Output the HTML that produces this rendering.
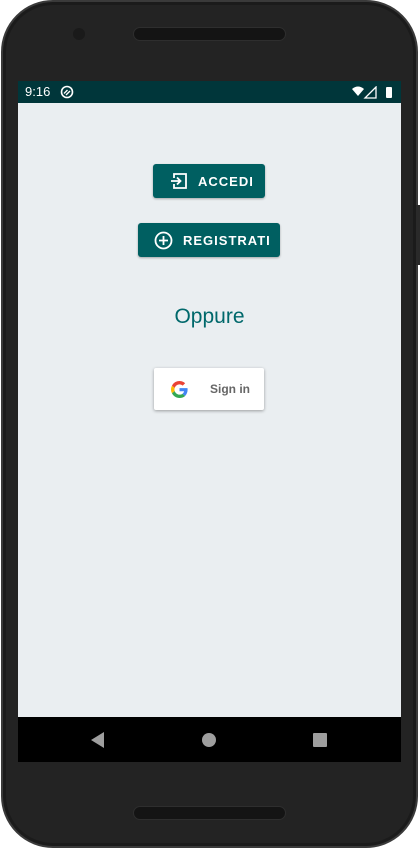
<!DOCTYPE html>
<html><head><style>
*{margin:0;padding:0;box-sizing:border-box}
body{width:420px;height:849px;background:#fff;position:relative;overflow:hidden;font-family:"Liberation Sans",Roboto,sans-serif}
.phone{position:absolute;left:1px;top:0;width:417px;height:848px;border-radius:52px;background:#232323;border:2px solid #3a3a3a;box-shadow:inset 0 0 0 3px #1b1b1b}
.btnside{position:absolute;left:416px;top:205px;width:4px;height:60px;background:#2a2a2a}
.spk{position:absolute;left:133px;width:153px;height:14px;border-radius:7px;background:#141414;border:1px solid #2e2e2e}
.cam{position:absolute;left:73px;top:28px;width:12px;height:12px;border-radius:50%;background:#1a1a1a}
.screen{position:absolute;left:18px;top:81px;width:383px;height:681px;background:#eaeef1}
.sb{position:absolute;left:0;top:0;width:383px;height:22px;background:#00363a;color:#fff;font-size:13px}
.nav{position:absolute;left:0;top:636px;width:383px;height:45px;background:#000}
.btn{position:absolute;background:#005f61;color:#fff;border-radius:3px;font-size:13px;font-weight:bold;letter-spacing:1px;display:flex;align-items:center;box-shadow:0 1px 2px rgba(0,0,0,.3)}
</style></head><body>
<div class="phone"></div>
<div class="btnside"></div>
<div class="spk" style="top:27px"></div>
<div class="spk" style="top:806px"></div>
<div class="cam"></div>
<div class="screen">
 <div class="sb">
  <span style="position:absolute;left:7px;top:3px">9:16</span>
  <svg style="position:absolute;left:42px;top:4px" width="14" height="14" viewBox="0 0 14 14"><circle cx="7" cy="7" r="5.5" fill="none" stroke="#fff" stroke-width="1.6"/><path d="M4 8.5l3.5-3.5M6 10l4-4" stroke="#fff" stroke-width="1.4"/></svg>
  <svg style="position:absolute;left:334px;top:5px" width="44" height="13" viewBox="0 0 44 13"><path d="M0 3q6-5 12 0l-6 7z" fill="#fff"/><path d="M24 1v11h-11z" fill="none" stroke="#fff" stroke-width="1.3"/><rect x="34" y="1" width="6" height="11" rx="1" fill="#fff"/></svg>
 </div>
 <div class="btn" style="left:135px;top:83px;width:112px;height:34px">
  <svg style="margin-left:17px" width="18" height="18" viewBox="0 0 18 18"><path d="M4 6V2h12v14H4v-4" fill="none" stroke="#fff" stroke-width="1.8"/><path d="M1 9h9M7 5.5l3.5 3.5L7 12.5" fill="none" stroke="#fff" stroke-width="1.8"/></svg>
  <span style="margin-left:10px">ACCEDI</span></div>
 <div class="btn" style="left:120px;top:142px;width:142px;height:34px">
  <svg style="margin-left:16px" width="19" height="19" viewBox="0 0 19 19"><circle cx="9.5" cy="9.5" r="8" fill="none" stroke="#fff" stroke-width="1.8"/><path d="M9.5 5v9M5 9.5h9" stroke="#fff" stroke-width="1.8"/></svg>
  <span style="margin-left:10px">REGISTRATI</span></div>
 <div style="position:absolute;left:0;width:383px;top:224px;text-align:center;color:#00686b;font-size:21px">Oppure</div>
 <div style="position:absolute;left:136px;top:287px;width:110px;height:42px;background:#fff;border-radius:2px;box-shadow:0 1px 3px rgba(0,0,0,.35)">
  <svg style="position:absolute;left:17px;top:13px" width="17" height="17" viewBox="0 0 48 48"><path fill="#EA4335" d="M24 9.5c3.5 0 6.6 1.2 9.1 3.6l6.8-6.8C35.8 2.4 30.3 0 24 0 14.6 0 6.6 5.4 2.7 13.3l7.9 6.1C12.5 13.7 17.8 9.5 24 9.5z"/><path fill="#4285F4" d="M46.9 24.5c0-1.6-.2-3.1-.4-4.5H24v9h12.9c-.6 3-2.3 5.5-4.8 7.2l7.7 6c4.5-4.2 7.1-10.3 7.1-17.7z"/><path fill="#FBBC05" d="M10.5 28.6c-.5-1.4-.8-3-.8-4.6s.3-3.2.8-4.6l-7.9-6.1C1 16.5 0 20.1 0 24s1 7.5 2.7 10.7l7.8-6.1z"/><path fill="#34A853" d="M24 48c6.5 0 11.9-2.1 15.9-5.8l-7.7-6c-2.2 1.5-5 2.3-8.2 2.3-6.2 0-11.5-4.2-13.4-9.9l-7.9 6.1C6.6 42.6 14.6 48 24 48z"/></svg>
  <span style="position:absolute;left:56px;top:14px;font-size:12px;font-weight:bold;color:#666">Sign in</span>
 </div>
 <div class="nav">
  <svg style="position:absolute;left:73px;top:15px" width="14" height="16"><path d="M13 0v16L0 8z" fill="#9e9e9e"/></svg>
  <div style="position:absolute;left:184px;top:16px;width:14px;height:14px;border-radius:50%;background:#9e9e9e"></div>
  <div style="position:absolute;left:295px;top:16px;width:14px;height:14px;background:#9e9e9e;border-radius:1px"></div>
 </div>
</div>
</body></html>
